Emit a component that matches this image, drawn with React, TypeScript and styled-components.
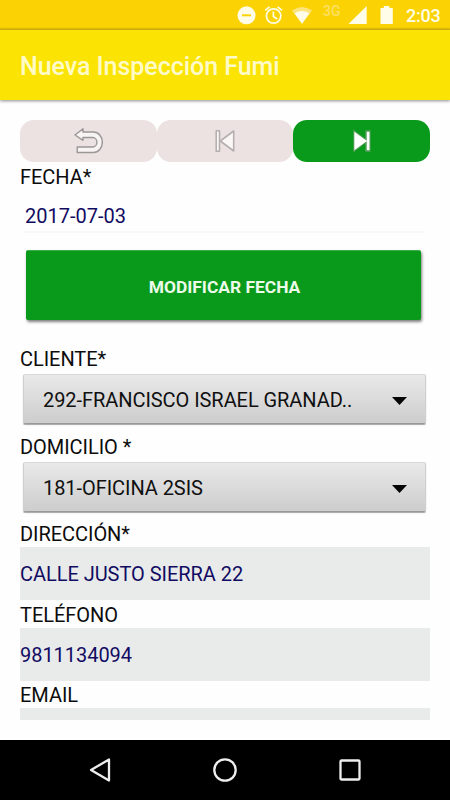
import React from "react";
import styled, { createGlobalStyle } from "styled-components";

const GlobalStyle = createGlobalStyle`
  *, *::before, *::after { box-sizing: border-box; }
  body { margin: 0; background: #fff; font-family: Roboto, "Liberation Sans", sans-serif; }
  button { font: inherit; border: 0; padding: 0; }
  svg { display: block; flex: none; }
`;

const Screen = styled.div`
  display: flex;
  flex-direction: column;
  width: 450px;
  height: 800px;
  overflow: hidden;
  background: #fefefe;
`;

const StatusBar = styled.header`
  display: flex;
  justify-content: flex-end;
  height: 30px;
  padding: 0 9px 0 0;
  background: linear-gradient(#fbd305 0, #fbd305 27px, #e0bc08 29px, #d3b30a 30px);
  color: #fffde8;
`;

const Clock = styled.time`
  width: 35px;
  margin-left: 13px;
  font-size: 18px;
  line-height: 31px;
  letter-spacing: -0.2px;
  font-weight: 500;
  white-space: nowrap;
`;

const Network = styled.span`
  width: 20px;
  margin: 3px 5px 0 -1px;
  font-size: 14px;
  line-height: 16px;
  font-weight: 500;
  color: #fce063;
`;

const TitleBar = styled.div`
  flex: none;
  height: 70px;
  padding-left: 20px;
  background: #fbe403;
  box-shadow: 0 1px 3px rgba(0, 0, 0, 0.45);
  z-index: 1;
`;

const Title = styled.h1`
  margin: 0;
  font-size: 25px;
  line-height: 73px;
  letter-spacing: -0.04px;
  font-weight: 500;
  color: #fffbc8;
`;

const Form = styled.main`
  flex: none;
  height: 600px;
  margin: 20px;
  overflow: hidden;
`;

const StepBar = styled.nav`
  display: grid;
  grid-template-columns: repeat(3, 1fr);
  height: 42px;
  margin-bottom: 1px;
`;

const StepButton = styled.button<{ $active?: boolean }>`
  display: flex;
  align-items: center;
  justify-content: center;
  border-radius: 14px;
  background: ${(p) => (p.$active ? "#099a1c" : "#ebe2e1")};
`;

const Label = styled.label`
  display: block;
  height: 27px;
  font-size: 20px;
  line-height: 28px;
  letter-spacing: -0.05px;
  color: #0c0c0c;
  white-space: nowrap;
`;

const DateValue = styled.div`
  height: 43px;
  margin: 0 6px 0 4px;
  padding-left: 1px;
  border-bottom: 2px solid #f8f8f8;
  font-size: 20px;
  line-height: 53px;
  color: #120b62;
`;

const PrimaryButton = styled.button`
  display: block;
  width: 395px;
  height: 70px;
  margin: 17px 0 25px 6px;
  padding-left: 2px;
  border-radius: 2px;
  background: #099a1c;
  border-top: 1px solid #3bad49;
  box-shadow: 1px 2px 3px rgba(0, 0, 0, 0.5);
  color: #ecfbe9;
  font-size: 17.4px;
  line-height: 72px;
  font-weight: 700;
`;

const Spinner = styled.button`
  display: flex;
  align-items: center;
  justify-content: space-between;
  width: 403px;
  height: 50px;
  margin: 2px 0 9px 3px;
  padding: 1px 18px 0 19px;
  border-radius: 2px;
  border: 1px solid #cfcfcf;
  border-top-color: #d9d9d9;
  border-bottom: 1px solid #999;
  background: linear-gradient(#e9e9e9, #cdcdcd);
  box-shadow: 0 1px 1px rgba(0, 0, 0, 0.35);
  font-size: 20px;
  letter-spacing: -0.06px;
  color: #101010;
  white-space: nowrap;

  svg { margin-top: 2px; }
`;

const ContactDetails = styled.section`
  margin-top: -1px;
`;

const ReadOnlyField = styled.div`
  height: 53px;
  margin-bottom: 0.5px;
  background: #e9ebeb;
  font-size: 20px;
  line-height: 54px;
  letter-spacing: -0.04px;
  color: #120b62;
`;

const SystemNav = styled.footer`
  display: flex;
  align-items: center;
  justify-content: space-between;
  height: 60px;
  padding: 0 88px;
  background: #000;
`;

const StatusIcons = () => (
  <svg width="87" height="30" viewBox="237 0 87 30" fill="none">
    <circle cx="246.5" cy="15.3" r="9" fill="#fffde8" />
    <path d="M242 15.3h9" stroke="#fbd305" strokeWidth="2" />
    <g stroke="#fffde8" strokeWidth="1.7">
      <circle cx="273.6" cy="16" r="7.2" />
      <path d="M273.4 11.5v5l3.8 2.5M265.2 10.4l4.3-3.5M282 10.4l-4.3-3.5" />
    </g>
    <path d="M292 10.5Q302 3.5 312 10.5L302 23.7Z" fill="#fce47a" />
    <path d="M294.5 13.3Q302 8.6 309.5 13.3L302 23.7Z" fill="#fffde8" />
  </svg>
);

const SignalIcons = () => (
  <svg width="45" height="30" viewBox="348 0 45 30" fill="#fffde8">
    <path d="M348.5 24L366.7 6v18Z" />
    <path d="M380.5 8h3.3V6h5.6v2h3.4v16h-12.3Z" />
  </svg>
);

const UndoIcon = () => (
  <svg width="30" height="28" viewBox="-1 0 30 28">
    <path
      d="M1 8 9 1.8V5h10.5a8.6 10 0 0 1 0 20.5H3.2V20h15.5a4.2 4.7 0 0 0 0-9.5H9v2.8Z"
      fill="#f7f4f3" stroke="#9b9796" strokeWidth="1.4" strokeLinejoin="round"
    />
  </svg>
);

const PreviousIcon = () => (
  <svg width="20" height="24" viewBox="0 0 20 24" fill="#faf8f7" stroke="#b5b0af" strokeWidth="1.6" strokeLinejoin="round">
    <path d="M1.2 1.8h3.3v20.4H1.2Z" />
    <path d="M18.7 2v20L5.3 12Z" />
  </svg>
);

const NextIcon = () => (
  <svg width="20" height="24" viewBox="0 0 20 24">
    <path d="M2 2v20L15 12ZM14 2h3.8v20H14Z" stroke="#5c9f60" strokeWidth="1.4" fill="none" />
    <path d="M2.3 2.7v18.6L15 12ZM14.7 2.7h2.8v18.6h-2.8Z" fill="#fff" />
  </svg>
);

const DownArrow = () => (
  <svg width="15" height="8" viewBox="0 0 15 8">
    <path d="M0 0h15L7.5 8Z" fill="#050505" />
  </svg>
);

const Select = ({ value }: { value: string }) => (
  <Spinner type="button">
    {value}
    <DownArrow />
  </Spinner>
);

export default function App() {
  return (
    <>
      <GlobalStyle />
      <Screen>
        <StatusBar>
          <StatusIcons />
          <Network>3G</Network>
          <SignalIcons />
          <Clock>2:03</Clock>
        </StatusBar>
        <TitleBar>
          <Title>Nueva Inspección Fumi</Title>
        </TitleBar>
        <Form>
          <StepBar>
            <StepButton><UndoIcon /></StepButton>
            <StepButton><PreviousIcon /></StepButton>
            <StepButton $active><NextIcon /></StepButton>
          </StepBar>
          <Label>FECHA*</Label>
          <DateValue>2017-07-03</DateValue>
          <PrimaryButton>MODIFICAR FECHA</PrimaryButton>
          <Label>CLIENTE*</Label>
          <Select value="292-FRANCISCO ISRAEL GRANAD.." />
          <Label>DOMICILIO *</Label>
          <Select value="181-OFICINA 2SIS" />
          <ContactDetails>
            <Label>DIRECCIÓN*</Label>
            <ReadOnlyField>CALLE JUSTO SIERRA 22</ReadOnlyField>
            <Label>TELÉFONO</Label>
            <ReadOnlyField>9811134094</ReadOnlyField>
            <Label>EMAIL</Label>
            <ReadOnlyField />
          </ContactDetails>
        </Form>
        <SystemNav>
          <svg width="24" height="28" viewBox="0 0 24 28">
            <path d="M21 3.5v21L3 14Z" fill="none" stroke="#eee" strokeWidth="2.3" strokeLinejoin="round" />
          </svg>
          <svg width="26" height="26" viewBox="0 0 26 26">
            <circle cx="13" cy="13" r="10.7" fill="none" stroke="#eee" strokeWidth="2.3" />
          </svg>
          <svg width="24" height="24" viewBox="0 0 24 24">
            <rect x="2.5" y="2.5" width="19" height="19" rx="1" fill="none" stroke="#eee" strokeWidth="2.3" />
          </svg>
        </SystemNav>
      </Screen>
    </>
  );
}
